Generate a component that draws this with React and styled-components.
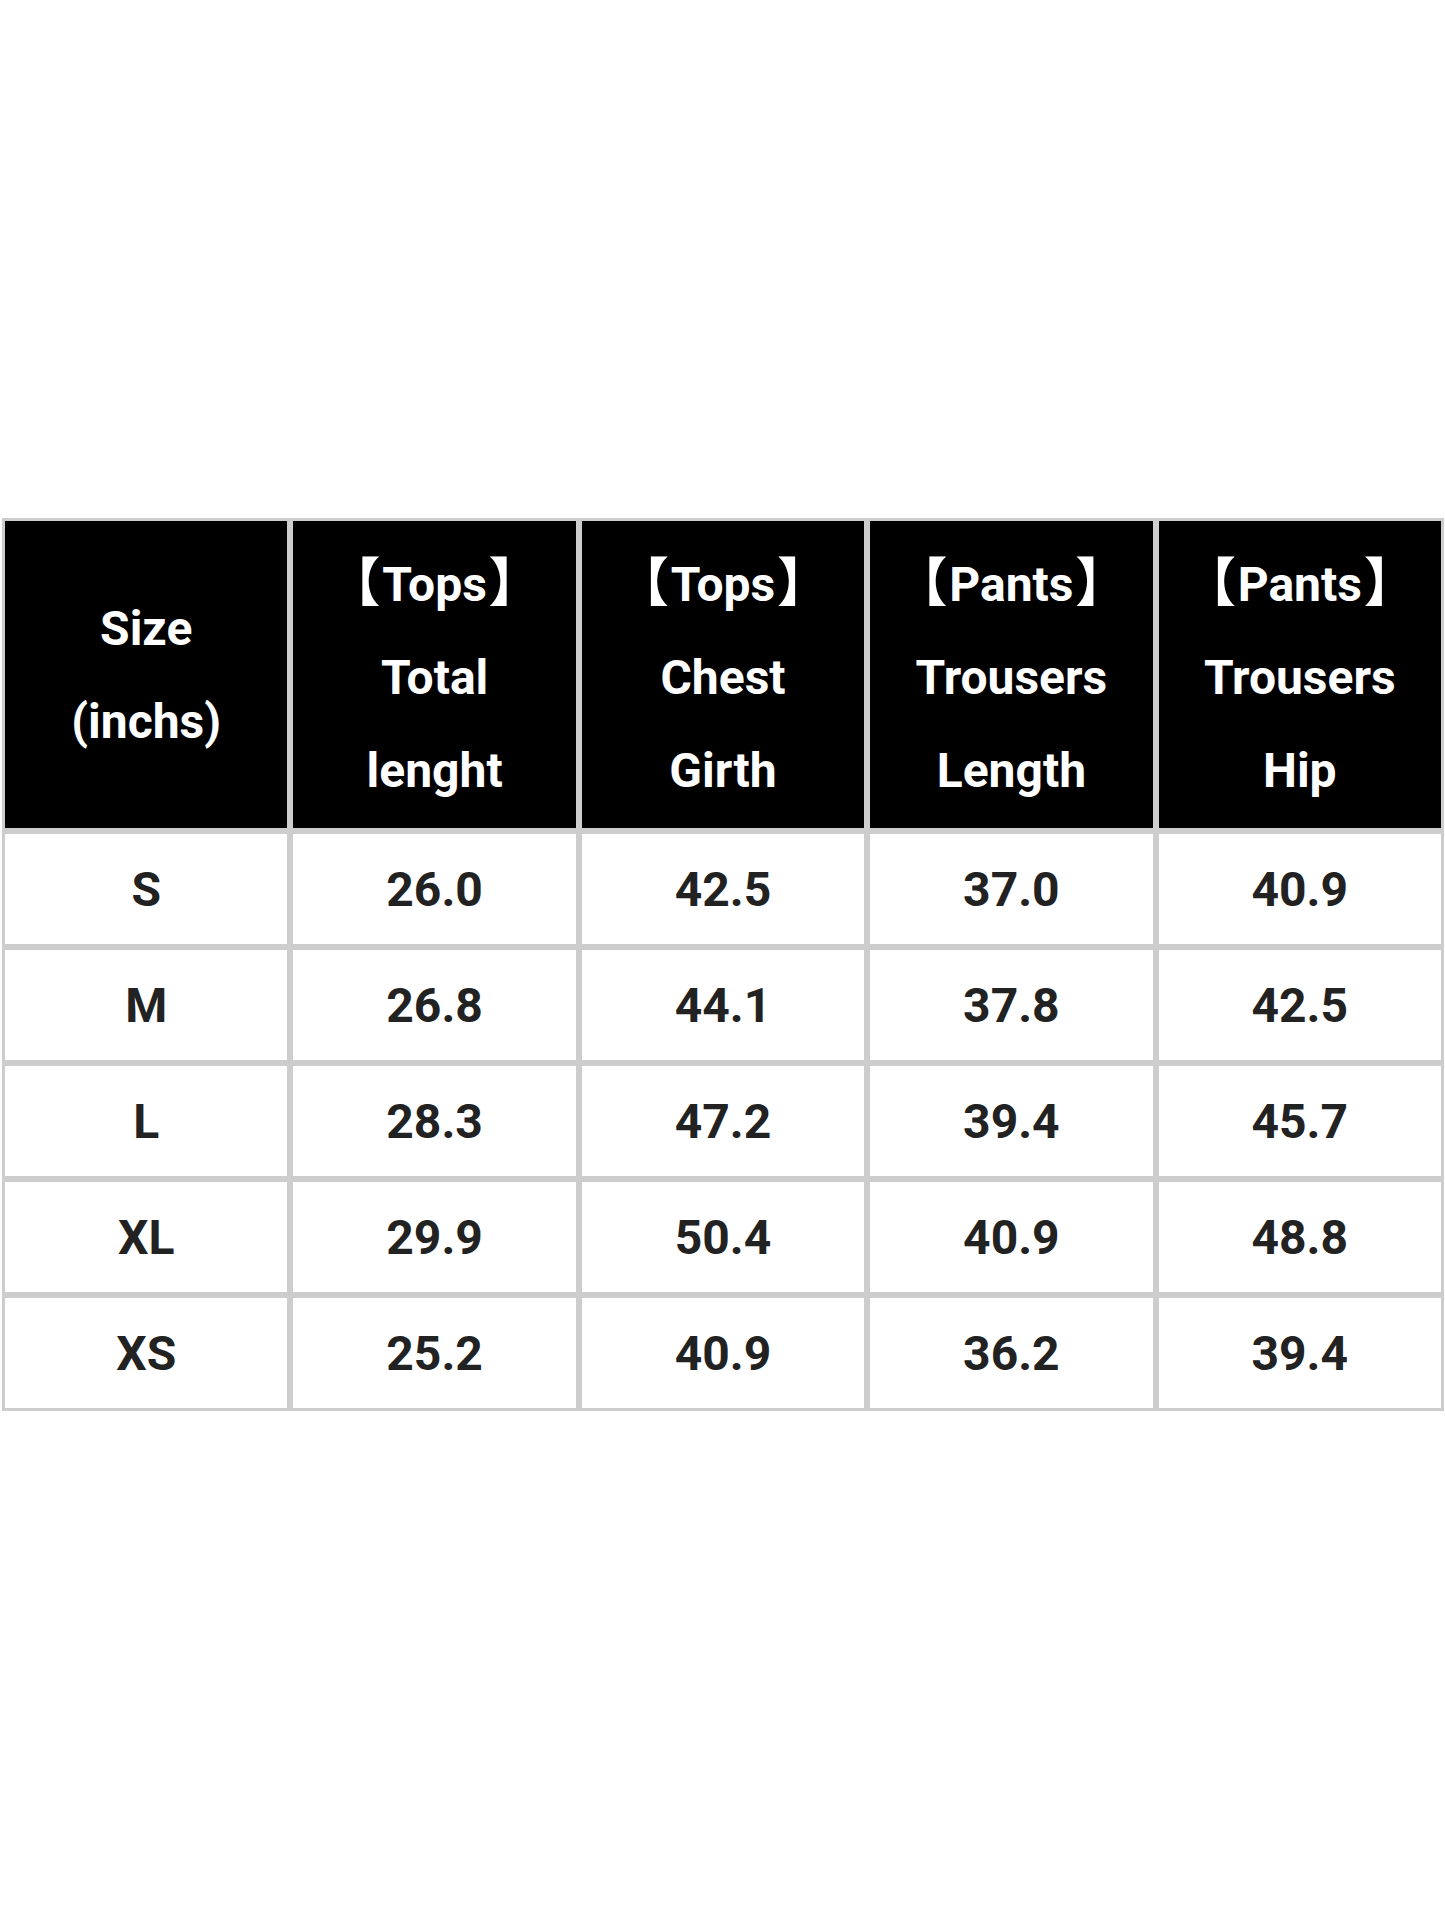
import React from 'react';
import styled, { createGlobalStyle } from 'styled-components';

const GlobalStyle = createGlobalStyle`
  html, body {
    margin: 0;
    padding: 0;
    background: #fff;
  }
  body {
    font-family: Roboto, 'Liberation Sans', Arial, sans-serif;
  }
`;

const Page = styled.div`
  width: 1445px;
  height: 1927px;
  padding-top: 518px;
  box-sizing: border-box;
  background: #fff;
`;

const Table = styled.div`
  display: grid;
  grid-template-columns: repeat(5, 1fr);
  grid-template-rows: 313px repeat(5, 116px);
  width: 1442px;
  margin-left: 2px;
`;

const Cell = styled.div`
  box-sizing: border-box;
  border: 3px solid #cdcdcd;
  display: flex;
  flex-direction: column;
  align-items: center;
  justify-content: center;
  text-align: center;
  font-weight: 700;
  font-size: 48px;
  background: ${(p) => (p.$head ? '#000' : '#fff')};
  color: ${(p) => (p.$head ? '#fff' : '#222')};
  line-height: ${(p) => (p.$head ? '93px' : '1')};
  padding-top: ${(p) => (p.$head ? '0' : '2px')};
`;

const Line = styled.span`
  display: block;
  white-space: nowrap;
`;

// full-width brackets, drawn a bit heavier than the cjk font gives
const Bracket = styled.span`
  font-family: 'Noto Sans CJK SC', sans-serif;
  font-weight: 900;
  font-size: 52px;
  margin: 0 ${(p) => (p.$open ? '2px 0 -2px' : '-2px 0 2px')};
`;

const headers = [
  ['Size', '(inchs)'],
  ['【Tops】', 'Total', 'lenght'],
  ['【Tops】', 'Chest', 'Girth'],
  ['【Pants】', 'Trousers', 'Length'],
  ['【Pants】', 'Trousers', 'Hip'],
];

const rows = [
  ['S', '26.0', '42.5', '37.0', '40.9'],
  ['M', '26.8', '44.1', '37.8', '42.5'],
  ['L', '28.3', '47.2', '39.4', '45.7'],
  ['XL', '29.9', '50.4', '40.9', '48.8'],
  ['XS', '25.2', '40.9', '36.2', '39.4'],
];

const renderLine = (text) => {
  if (!text.startsWith('【')) return text;
  const inner = text.slice(1, -1);
  return (
    <>
      <Bracket $open>【</Bracket>
      {inner}
      <Bracket>】</Bracket>
    </>
  );
};

export default function App() {
  return (
    <Page>
      <GlobalStyle />
      <Table>
        {headers.map((lines, i) => (
          <Cell $head key={`h${i}`}>
            {lines.map((l, j) => (
              <Line key={j}>{renderLine(l)}</Line>
            ))}
          </Cell>
        ))}
        {rows.map((row, r) =>
          row.map((val, c) => <Cell key={`${r}-${c}`}>{val}</Cell>)
        )}
      </Table>
    </Page>
  );
}
